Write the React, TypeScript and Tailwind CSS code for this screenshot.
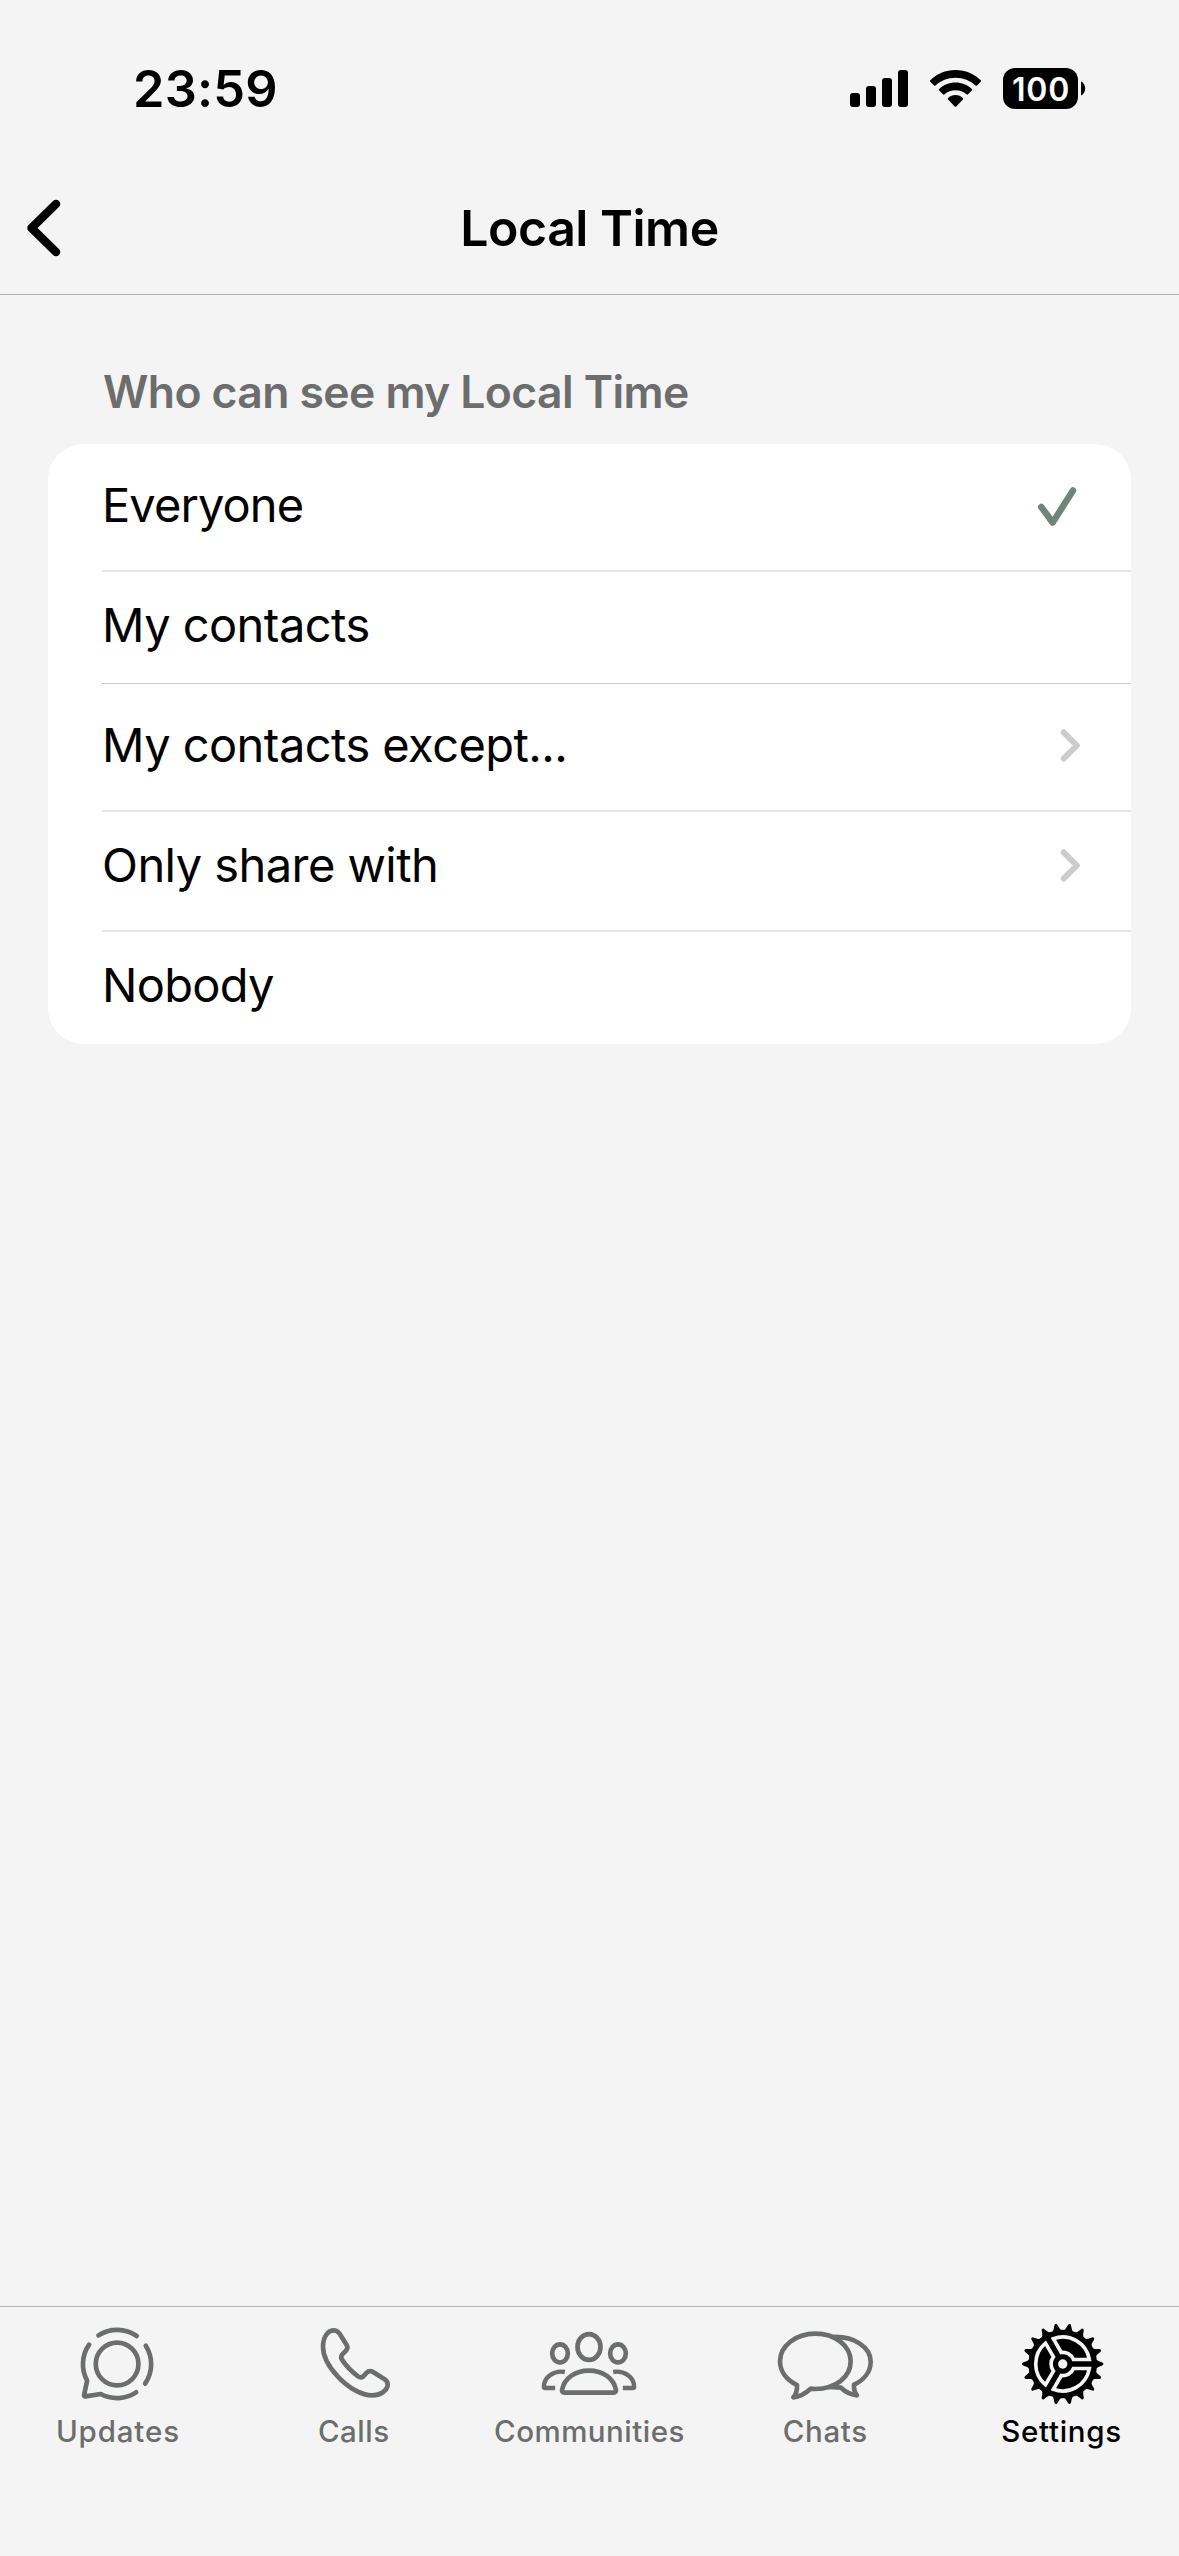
import type { ReactNode } from "react";
import clsx from "clsx";

// Options de confidentialité affichées dans la carte
// Les hauteurs suivent les séparateurs, qui ne tombent pas tous au même endroit
const options = [
  { label: "Everyone", icon: "check", row: "h-[128px] pt-[31px]", line: "border-b-2 border-[#e5e5e5]", tracking: "tracking-[-0.9px]" },
  { label: "My contacts", icon: null, row: "h-[112px] pt-[23px]", line: "border-b border-[#cccccc]", tracking: "tracking-[-0.55px]" },
  { label: "My contacts except...", icon: "chevron", row: "h-[128px] pt-[31px]", line: "border-b-2 border-[#e5e5e5]", tracking: "tracking-[-0.55px]" },
  { label: "Only share with", icon: "chevron", row: "h-[120px] pt-[23px]", line: "border-b-2 border-[#e5e5e5]", tracking: "tracking-[-0.55px]" },
  { label: "Nobody", icon: null, row: "h-[112px] pt-[23px]", line: "", tracking: "tracking-[-0.7px]" },
];

// Angles des 18 dents de la roue
const teeth = Array.from({ length: 18 }, (_, i) => i * 20);

const StatusBar = () => (
  <div className="flex h-[162px] items-start justify-between pl-[133px] pr-[93px] pt-[68px]">
    <span className="h-[41px] text-[50.5px] font-semibold leading-[42px] tracking-[0.2px]">23:59</span>
    <div className="flex">
      {/* Réseau, wifi et batterie */}
      <svg className="h-[41px] w-[58px]" viewBox="0 0 58 41">
        <rect x="0" y="25" width="10" height="14" rx="3" />
        <rect x="16" y="18" width="10" height="21" rx="3" />
        <rect x="32" y="10" width="10" height="29" rx="3" />
        <rect x="48" y="2" width="10" height="37" rx="3" />
      </svg>
      <svg className="ml-[22px] h-[41px] w-[51px]" viewBox="0 0 51 41">
        <path d="M25.5 2C35.5 2 44.3 5.8 50.7 12.2Q51.4 13 50.7 13.8L47 17.5Q46.3 18.2 45.5 17.5C40.3 12.6 33.3 9.7 25.5 9.7S10.7 12.6 5.5 17.5Q4.7 18.2 4 17.5L.3 13.8Q-.4 13 .3 12.2C6.7 5.8 15.5 2 25.5 2Z" />
        <path d="M25.5 14.6C31.9 14.6 37.6 17 41.8 20.9Q42.5 21.7 41.8 22.5L38 26.3Q37.2 27 36.4 26.3C33.5 23.7 29.7 22.2 25.5 22.2S17.5 23.7 14.6 26.3Q13.8 27 13 26.3L9.2 22.5Q8.5 21.7 9.2 20.9C13.4 17 19.1 14.6 25.5 14.6Z" />
        <path d="M25.5 27C28.4 27 31 28.1 32.9 29.9Q33.7 30.7 32.9 31.5L26.3 38.4Q25.5 39.2 24.7 38.4L18.1 31.5Q17.3 30.7 18.1 29.9C20 28.1 22.6 27 25.5 27Z" />
      </svg>
      <div className="ml-[22px] flex h-[41px] w-[75px] items-center justify-center rounded-[12px] bg-black pl-px pt-[3px] text-[32px] font-semibold leading-[38px] tracking-[0.8px] text-white">
        100
      </div>
      <svg className="ml-[3px] h-[41px] w-[5px]" viewBox="0 0 5 41">
        <path d="M0 13.5C2.5 14.5 4.2 17.3 4.2 20.5S2.5 26.5 0 27.5Z" />
      </svg>
    </div>
  </div>
);

const Header = () => (
  <header className="grid h-[133px] grid-cols-[1fr_auto_1fr] items-center border-b border-[#b2b2b2]">
    <svg className="ml-[26px] h-[60px] w-[36px]" viewBox="26 198 36 60" fill="none">
      <path d="M56 204L31.5 228L56 252" stroke="#000" strokeWidth="8.5" strokeLinecap="round" strokeLinejoin="round" />
    </svg>
    <h1 className="text-[50px] font-semibold leading-[60px] tracking-[-0.5px]">Local Time</h1>
  </header>
);

const Check = () => (
  <svg className="-mt-px h-[60px] w-[40px]" viewBox="1038 474 40 60" fill="none">
    <path d="M1041.3 507L1052.7 522.5L1073 490.5" stroke="#70857a" strokeWidth="6.5" strokeLinecap="round" strokeLinejoin="round" />
  </svg>
);

const Chevron = () => (
  <svg className="-mt-px h-[60px] w-[22px]" viewBox="1059 714 22 60" fill="none">
    <path d="M1063.7 732.3L1076.8 745.5L1063.7 758.7" stroke="#cdcdcd" strokeWidth="6" strokeLinecap="round" strokeLinejoin="round" />
  </svg>
);

const TabIcon = ({ viewBox, children }: { viewBox: string; children: ReactNode }) => (
  <svg
    className="h-[90px] w-[100px]"
    viewBox={viewBox}
    fill="none"
    stroke="currentColor"
    strokeWidth="14"
    strokeLinecap="round"
    strokeLinejoin="round"
  >
    {children}
  </svg>
);

const UpdatesIcon = () => (
  <TabIcon viewBox="113.7 90 300 270">
    <circle cx="261" cy="222" r="64" />
    <path d="M205 136A103 103 0 0 1 320 138" />
    <path d="M347 167A103 103 0 0 1 345 281" />
    <path d="M318 307A103 103 0 0 1 212 312L166 319Q161 320 162 315L171 272A103 103 0 0 1 177 164" />
  </TabIcon>
);

const CallsIcon = () => (
  <TabIcon viewBox="71 90 300 270">
    <path d="M128 170C128 140 143 121 161 121C168 121 173 125 177 130L199 165C203 171 202 176 197 182L186 193C182 198 181 203 185 209C196 226 214 245 233 259C239 263 244 263 249 259L259 248C264 243 270 242 277 245L313 268C321 273 323 279 322 287C319 303 300 316 276 316C245 316 205 295 172 259C143 228 128 196 128 170Z" />
  </TabIcon>
);

const CommunitiesIcon = () => (
  <TabIcon viewBox="178.5 90 300 270">
    <ellipse cx="328.5" cy="171" rx="34.5" ry="38.5" />
    <ellipse cx="241.5" cy="190" rx="23.5" ry="27" />
    <ellipse cx="415.5" cy="190" rx="23.5" ry="27" />
    <path d="M255 308H402C408 308 411 304 409 298C402 265 371 242 328.5 242C286 242 255 265 248 298C246 304 249 308 255 308Z" />
    <path d="M256 246C225 240 193 260 193 291Q193 294 197 294H227" strokeWidth="13" strokeLinecap="butt" />
    <path d="M401 246C432 240 464 260 464 291Q464 294 460 294H430" strokeWidth="13" strokeLinecap="butt" />
  </TabIcon>
);

const ChatsIcon = () => (
  <TabIcon viewBox="106 90 300 270">
    <path d="M227 131C286 131 333 167 333 214C333 262 287 297 227 297L213 296C200 308 180 320 161 322C171 311 173 300 172 285C141 270 121 244 121 214C121 168 168 131 227 131Z" />
    <path d="M278 141C345 138 393 172 393 215C393 245 373 270 343 284C342 297 344 307 352 316C334 314 317 305 304 293L268 291" />
  </TabIcon>
);

const SettingsIcon = () => (
  <TabIcon viewBox="93.3 90 300 270">
    <g transform="translate(245.5 222)">
      <circle r="103" fill="currentColor" stroke="none" />
      {teeth.map((angle) => (
        <path key={angle} transform={`rotate(${angle})`} d="M98 -15L107 -9L117 -5Q122 -4 122 0T117 5L107 9L98 15Z" fill="currentColor" stroke="none" />
      ))}
      {/* Trois secteurs entre les rayons */}
      {[0, 120, 240].map((angle) => (
        <path
          key={angle}
          transform={`rotate(${angle})`}
          d="M32.3 -13.5L79.9 -13.5A81 81 0 0 0 -28.2 -75.9L-4.4 -34.7A35 35 0 0 1 32.3 -13.5Z"
          stroke="#f4f4f4"
          strokeWidth="11"
          strokeLinejoin="miter"
        />
      ))}
      <circle r="14" fill="#f4f4f4" stroke="none" />
    </g>
  </TabIcon>
);

// Onglets de la barre du bas
const tabs = [
  { label: "Updates", icon: <UpdatesIcon />, tracking: "tracking-[0.85px]" },
  { label: "Calls", icon: <CallsIcon />, tracking: "tracking-[0.5px]" },
  { label: "Communities", icon: <CommunitiesIcon />, tracking: "tracking-[0.5px]" },
  { label: "Chats", icon: <ChatsIcon />, tracking: "tracking-[0.7px]" },
  { label: "Settings", icon: <SettingsIcon />, tracking: "tracking-[0.7px]", active: true },
];

const App = () => {
  return (
    <div className="flex h-[2556px] w-[1179px] flex-col overflow-hidden bg-[#f4f4f4] font-['Inter',sans-serif] text-black">
      <StatusBar />
      <Header />

      <main className="flex-1 px-[48px] pt-[67px]">
        <h2 className="h-[82px] pl-[55px] text-[44.5px] font-semibold leading-[60px] tracking-[-0.6px] text-[#6b6e6c]">
          Who can see my Local Time
        </h2>
        <ul className="overflow-hidden rounded-[36px] bg-white pl-[54px]">
          {options.map((option) => (
            <li key={option.label} className={clsx("flex justify-between", option.row, option.line)}>
              <span className={clsx("text-[47px] leading-[60px]", option.tracking)}>{option.label}</span>
              {option.icon === "check" && <div className="pr-[53px]"><Check /></div>}
              {option.icon === "chevron" && <div className="pr-[50px]"><Chevron /></div>}
            </li>
          ))}
        </ul>
      </main>

      {/* Barre de navigation */}
      <nav className="grid h-[250px] grid-cols-5 border-t border-[#b2b2b2] pt-[13px]">
        {tabs.map((tab) => (
          <div key={tab.label} className={clsx("flex flex-col items-center", tab.active ? "pl-px text-black" : "text-[#6b6e6c]")}>
            {tab.icon}
            <span className={clsx("mt-[3px] text-[29.5px] font-medium leading-[36px]", tab.tracking)}>{tab.label}</span>
          </div>
        ))}
      </nav>
    </div>
  );
};

export default App;
